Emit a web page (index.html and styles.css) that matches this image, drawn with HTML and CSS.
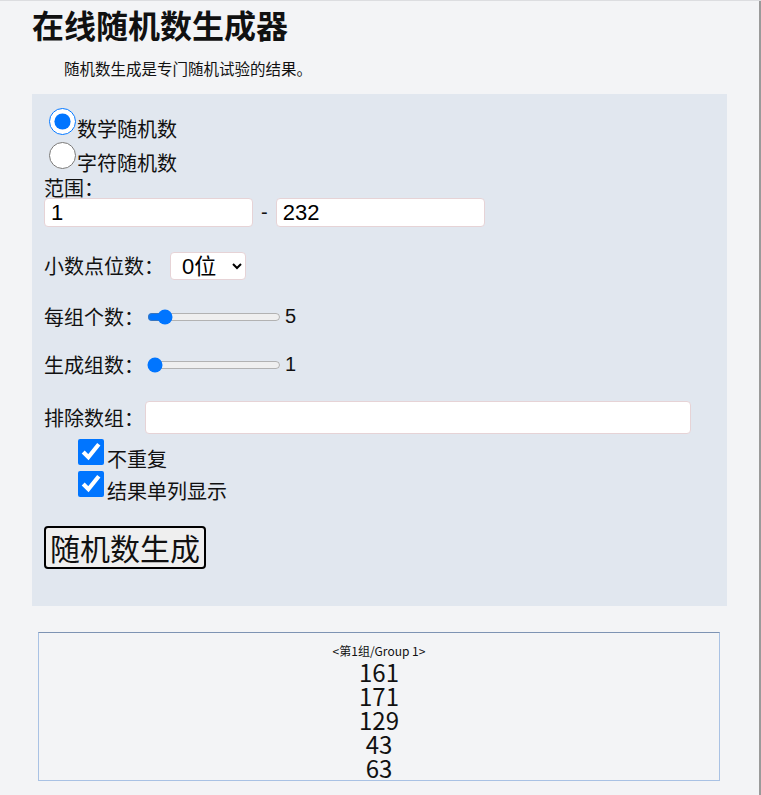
FILE: index.html
```html
<!DOCTYPE html>
<html lang="zh-CN">

<head>
    <meta charset="UTF-8">
    <meta name="viewport" content="width=device-width, initial-scale=1.0">
    <title>在线随机数生成器</title>
    <link rel="stylesheet" href="styles.css">
</head>

<body>
    <div class="page">
        <h1 class="title">在线随机数生成器</h1>
        <p class="intro">随机数生成是专门随机试验的结果。</p>

        <form class="panel">
            <label class="line"><input type="radio" name="kind" checked><span>数学随机数</span></label>
            <label class="line"><input type="radio" name="kind"><span>字符随机数</span></label>
            <div class="label">范围：</div>
            <div class="range-row">
                <input class="box" type="text" value="1">
                <span class="dash">-</span>
                <input class="box" type="text" value="232">
            </div>

            <div class="field f-digits">
                <span>小数点位数：</span>
                <select class="digits">
                    <option>0位</option>
                    <option>1位</option>
                    <option>2位</option>
                </select>
            </div>

            <div class="field f-count">
                <span>每组个数：</span>
                <input class="slider" type="range" min="1" max="50" value="5">
                <span class="num">5</span>
            </div>

            <div class="field f-groups">
                <span>生成组数：</span>
                <input class="slider" type="range" min="1" max="50" value="1">
                <span class="num">1</span>
            </div>

            <div class="field f-exclude">
                <span>排除数组：</span>
                <input class="box wide" type="text">
            </div>
            <label class="check first"><input type="checkbox" checked><span>不重复</span></label>
            <label class="check"><input type="checkbox" checked><span>结果单列显示</span></label>

            <button class="go" type="button">随机数生成</button>
        </form>

        <div class="result">
            <div class="group-name">&lt;第1组/Group 1&gt;</div>
            <div class="nums">161<br>171<br>129<br>43<br>63</div>
        </div>
    </div>
</body>

</html>
```

FILE: styles.css
```css
html {
    background: #f3f4f6;
    border-top: 1px solid #dcdde0;
}

body {
    margin: 0;
    font-family: "Noto Sans CJK SC", "Noto Sans", sans-serif;
    color: #111;
    border-right: 2px solid #9a9a9a;
    height: 794px;
    overflow: hidden;
}

.page {
    padding: 0 32px;
}

.title {
    margin: 0;
    padding-top: 3px;
    font-size: 32px;
    line-height: 40px;
    font-weight: 700;
}

.intro {
    margin: 0;
    padding: 14px 0 0 32px;
    font-size: 15.5px;
    line-height: 20px;
    height: 36px;
}

.panel {
    background: #e1e7ef;
    padding: 11px 12px 37px;
    font-size: 20px;
    line-height: 20px;
}

/* radio rows: box sits a little above the text baseline */
.line {
    display: flex;
    align-items: flex-end;
    height: 34px;
}

.line input {
    width: 27px;
    height: 27px;
    margin: 0 1px 4px 5px;
}

.label {
    margin-top: 5px;
    line-height: 20px;
}

.range-row {
    display: flex;
    align-items: center;
    gap: 8px;
}

.box {
    box-sizing: border-box;
    width: 209px;
    height: 29px;
    padding: 0 6px;
    border: 1px solid #e6d3d6;
    border-radius: 4px;
    background: #fff;
    font: 22px "Liberation Sans", Arial, sans-serif;
    color: #000;
}

.dash {
    font: 20px "Liberation Sans", Arial, sans-serif;
}

.field {
    display: flex;
    align-items: center;
    height: 29px;
}

.f-digits {
    margin-top: 24px;
}

.f-count {
    margin-top: 22px;
}

.f-groups {
    margin-top: 19px;
}

.f-exclude {
    margin-top: 22px;
    height: 33px;
}

.digits {
    box-sizing: border-box;
    margin-left: 6px;
    width: 76px;
    height: 28px;
    border: 1px solid #e6d3d6;
    border-radius: 4px;
    background: #fff;
    font: 22px "Liberation Sans", "Noto Sans CJK SC", sans-serif;
    padding: 0 2px 0 7px;
}

.slider {
    width: 134px;
    margin: 0 4px 0 3px;
}

.num {
    font: 20px "Liberation Sans", Arial, sans-serif;
}

.wide {
    width: 546px;
    height: 33px;
    margin-left: 1px;
}

.check {
    display: flex;
    align-items: flex-end;
    height: 32px;
    padding-left: 34px;
}

.check.first {
    margin-top: 3px;
}

.check input {
    width: 26px;
    height: 26px;
    margin: 0 3px 4px 0;
}

.go {
    margin-top: 25px;
    font: 30px "Noto Sans CJK SC", sans-serif;
    line-height: 39px;
    padding: 0 4px;
    border: 2px solid #000;
    border-radius: 4px;
    background: #efefef;
    color: #111;
}

.result {
    margin: 26px 7px 0 6px;
    border: 1px solid #a9c2e4;
    border-top-color: #7d93b3;
    text-align: center;
    padding-top: 9px;
    height: 138px;
}

.group-name {
    font-size: 12px;
    line-height: 18px;
}

.nums {
    font-size: 24px;
    line-height: 24px;
}
```
